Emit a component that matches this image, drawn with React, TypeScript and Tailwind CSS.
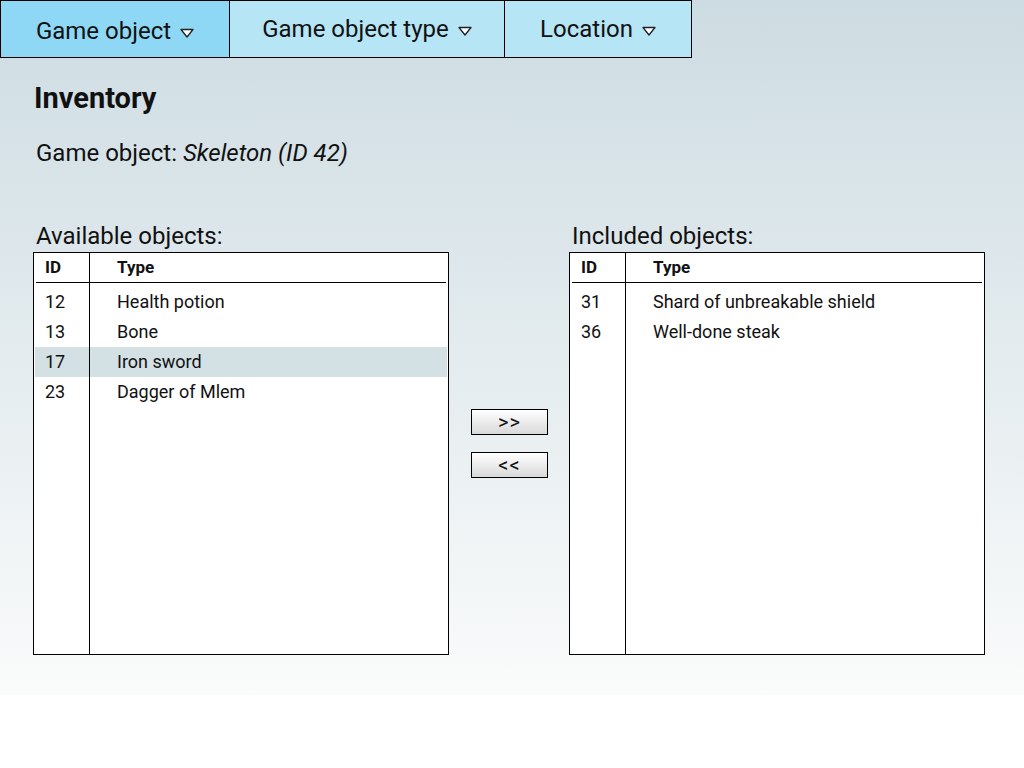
import React from 'react';

type Item = { id: number; type: string };

const available: Item[] = [
  { id: 12, type: 'Health potion' },
  { id: 13, type: 'Bone' },
  { id: 17, type: 'Iron sword' },
  { id: 23, type: 'Dagger of Mlem' },
];

const included: Item[] = [
  { id: 31, type: 'Shard of unbreakable shield' },
  { id: 36, type: 'Well-done steak' },
];

const Caret = () => (
  <svg width="14" height="10" viewBox="0 0 14 10" className="ml-[9px] mt-[4px]">
    <path d="M1 1.5 L13 1.5 L7 9 Z" fill="#fff" stroke="#222" strokeWidth="1.3" strokeLinejoin="round" />
  </svg>
);

const Tab = ({ label, width, active, first }: { label: string; width: string; active?: boolean; first?: boolean }) => (
  <div
    className={`${width} h-[58px] flex items-center justify-center border border-black ${first ? '' : 'border-l-0'} ${
      active ? 'bg-[#8ed8f5] pt-[4px]' : 'bg-[#b6e5f5]'
    }`}
  >
    <span className="text-[24px] text-[#111]">{label}</span>
    <Caret />
  </div>
);

const ObjectTable = ({ title, items, selected }: { title: string; items: Item[]; selected?: number }) => (
  <div className="flex flex-col w-[416px]">
    <div className="text-[24px] leading-[28px] ml-[3px] mb-[2px] text-[#111]">{title}</div>
    <div className="h-[403px] border border-black bg-white flex flex-col">
      <div className="flex h-[29px] items-center text-[17px] font-bold text-[#111]">
        <div className="w-[56px] h-full border-r border-black pl-[11px] flex items-center">ID</div>
        <div className="pl-[27px]">Type</div>
      </div>
      <div className="h-px bg-black mx-[2px]" />
      <div className="flex-1 flex flex-col px-px">
        <div className="flex h-[4px]">
          <div className="w-[55px] border-r border-black" />
        </div>
        {items.map((it) => (
          <div
            key={it.id}
            className={`flex h-[30px] items-center text-[18px] text-[#111] ${it.id === selected ? 'bg-[#d3e0e4]' : ''}`}
          >
            <div className="w-[55px] h-full border-r border-black pl-[10px] pb-px flex items-center">{it.id}</div>
            <div className="pl-[27px] pb-px">{it.type}</div>
          </div>
        ))}
        <div className="flex flex-1">
          <div className="w-[55px] border-r border-black" />
        </div>
      </div>
    </div>
  </div>
);

const MoveButton = ({ label }: { label: string }) => (
  <button className="w-[77px] h-[26px] border border-black bg-gradient-to-b from-white to-[#d9d9d9] text-[20px] leading-none tracking-[1px] text-[#111] flex items-center justify-center">
    {label}
  </button>
);

const App: React.FC = () => {
  return (
    <div className="w-screen h-[768px] bg-white overflow-hidden" style={{ fontFamily: 'Roboto, "Liberation Sans", sans-serif' }}>
      <div className="h-[695px] bg-gradient-to-b from-[#cddce2] to-[#fafbfb] flex flex-col">
        <div className="flex">
          <Tab label="Game object" width="w-[230px]" active first />
          <Tab label="Game object type" width="w-[275px]" />
          <Tab label="Location" width="w-[187px]" />
        </div>

        <h1 className="mt-[24px] ml-[34px] text-[29px] leading-[32px] font-bold text-[#111]">Inventory</h1>
        <p className="mt-[24px] ml-[36px] text-[24px] leading-[30px] text-[#111]">
          Game object: <em>Skeleton (ID 42)</em>
        </p>

        <div className="mt-[54px] ml-[33px] flex">
          <ObjectTable title="Available objects:" items={available} selected={17} />
          <div className="w-[120px] flex flex-col items-center gap-[17px] pt-[187px] pl-px">
            <MoveButton label=">>" />
            <MoveButton label="<<" />
          </div>
          <ObjectTable title="Included objects:" items={included} />
        </div>
      </div>
    </div>
  );
};

export default App;
